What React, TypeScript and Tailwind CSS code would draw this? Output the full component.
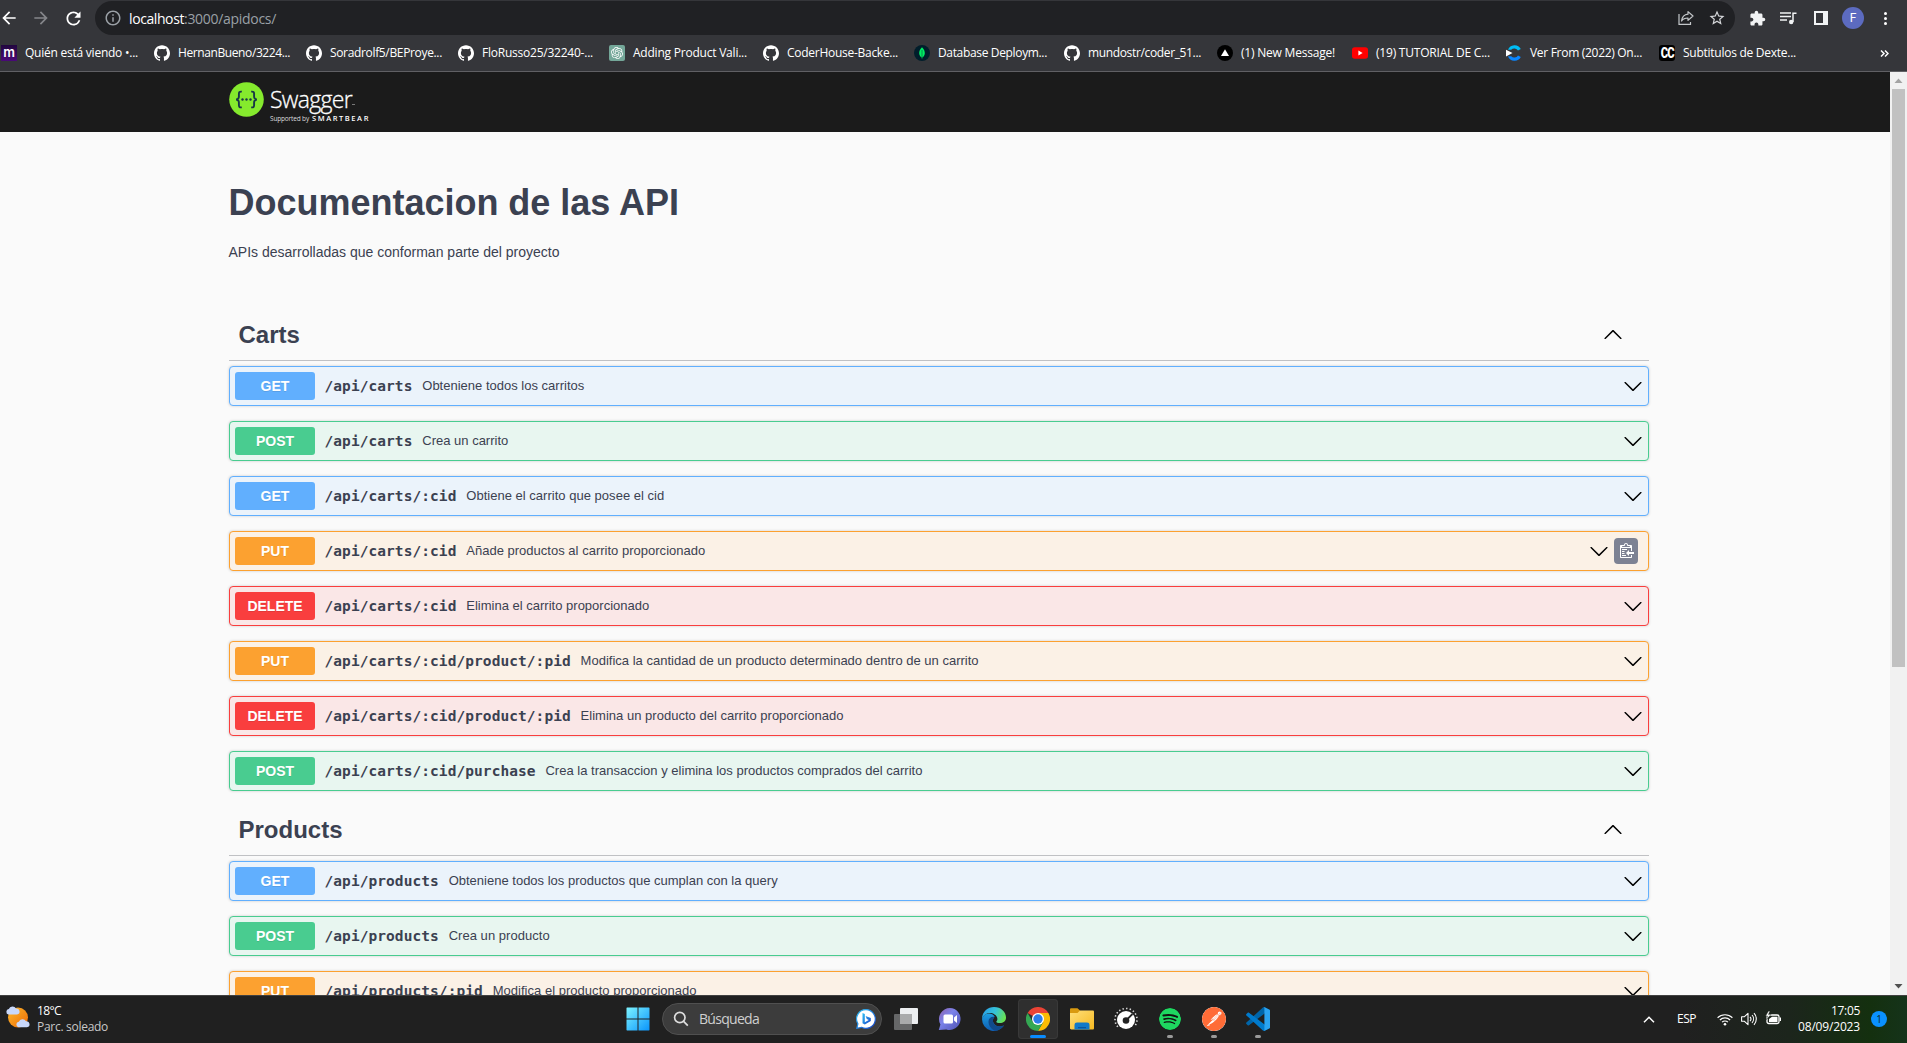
import React, { useLayoutEffect, useRef, useState } from "react";
import { SiGithub, SiOpenai, SiSpotify, SiPostman } from "react-icons/si";
import { MdArrowBack, MdArrowForward, MdRefresh, MdInfoOutline, MdStarBorder, MdExtension } from "react-icons/md";

/* One line of text whose letter spacing is adjusted to fill a given width. */
function Fit({ text, width, className = "" }: { text: string; width: number; className?: string }) {
  const ref = useRef<HTMLSpanElement>(null);
  const [spacing, setSpacing] = useState(0);
  useLayoutEffect(() => {
    if (ref.current) {
      const natural = ref.current.getBoundingClientRect().width;
      setSpacing((width - natural) / text.length);
    }
  }, [text, width]);
  return (
    <span ref={ref} className={"inline-block whitespace-pre " + className} style={{ letterSpacing: spacing }}>
      {text}
    </span>
  );
}

const Github = () => <SiGithub size={16} className="text-white" />;

const bookmarks: { icon: React.ReactNode; text: string; width: number; slot: string }[] = [
  {
    icon: (
      <span className="flex h-4 w-4 items-center justify-center bg-linear-to-b from-[#22073f] to-[#4a0a78] pb-0.5 font-['Inter'] text-[13px] leading-none font-semibold text-white">
        m
      </span>
    ),
    text: "Quién está viendo •...",
    width: 113,
    slot: "w-[153px]",
  },
  { icon: <Github />, text: "HernanBueno/3224...", width: 112, slot: "w-[152px]" },
  { icon: <Github />, text: "Soradrolf5/BEProye...", width: 112, slot: "w-[152px]" },
  { icon: <Github />, text: "FloRusso25/32240-...", width: 111, slot: "w-[151px]" },
  {
    icon: (
      <span className="flex h-4 w-4 items-center justify-center rounded-[2px] bg-[#74a799]">
        <SiOpenai size={12} className="text-white" />
      </span>
    ),
    text: "Adding Product Vali...",
    width: 114,
    slot: "w-[154px]",
  },
  { icon: <Github />, text: "CoderHouse-Backe...", width: 111, slot: "w-[151px]" },
  {
    icon: (
      <svg width="16" height="16" viewBox="0 0 16 16">
        <circle cx="8" cy="8" r="8" fill="#001e2b" />
        <path d="M8 2.200c2 2 3 4 2.800 6.300-.1 1.900-1.200 3.300-2.800 4.200-1.600-.9-2.700-2.300-2.800-4.200C5 6.200 6 4.200 8 2.200z" fill="#00ed64" />
        <path d="M8 5v9" stroke="#067a45" strokeWidth=".8" />
      </svg>
    ),
    text: "Database Deploym...",
    width: 109,
    slot: "w-[150px]",
  },
  { icon: <Github />, text: "mundostr/coder_51...", width: 113, slot: "w-[153px]" },
  {
    icon: (
      <svg width="16" height="16" viewBox="0 0 16 16">
        <circle cx="8" cy="8" r="8" fill="#000" />
        <path d="M8 4.200l4 6.800H4z" fill="#fff" />
      </svg>
    ),
    text: "(1) New Message!",
    width: 94,
    slot: "w-[135px]",
  },
  {
    icon: (
      <svg width="16" height="16" viewBox="0 0 16 16">
        <rect x="0" y="2.300" width="16" height="11.500" rx="2.800" fill="#f00" />
        <path d="M6.400 5.600l4.200 2.400-4.200 2.400z" fill="#fff" />
      </svg>
    ),
    text: "(19) TUTORIAL DE C...",
    width: 114,
    slot: "w-[154px]",
  },
  {
    icon: (
      <svg width="16" height="16" viewBox="0 0 16 16">
        <path d="M2 4.800A7 7 0 0 1 14.800 4L12 5.600A4.300 4.300 0 0 0 5.200 4.800z" fill="#00bdf5" />
        <path d="M2 11.200A7 7 0 0 0 14.800 12L12 10.400a4.300 4.300 0 0 1-6.800.8z" fill="#0a86ff" />
        <path d="M0 4.800l6.500 3.300L0 11.400z" fill="#fff" />
      </svg>
    ),
    text: "Ver From (2022) On...",
    width: 112,
    slot: "w-[153px]",
  },
  {
    icon: (
      <span className="flex h-4 w-4 items-center justify-center rounded-[3px] bg-black font-['Roboto'] text-[14px] leading-none font-black tracking-[-1px] text-white">
        <span className="scale-x-[0.8]">CC</span>
      </span>
    ),
    text: "Subtitulos de Dexte...",
    width: 113,
    slot: "w-[200px]",
  },
];

function BrowserBar() {
  return (
    <div className="h-[72px] w-full shrink-0 border-b border-[#606064] bg-[#35363a] font-['Open_Sans',sans-serif] text-white">
      <div className="flex h-9 items-center">
        <MdArrowBack size={20} className="-ml-px shrink-0 text-white" />
        <MdArrowForward size={20} className="ml-[12px] shrink-0 text-[#85868a]" />
        <MdRefresh size={21} className="ml-[12px] shrink-0 text-white" />
        <div className="ml-[11px] flex h-[34px] w-[1640px] items-center rounded-full bg-[#202124] pr-[9px] pl-[9px]">
          <MdInfoOutline size={18} className="text-[#9aa0a6]" />
          <div className="ml-[7px] flex grow items-center text-[14px]">
            <Fit text="localhost" width={55} className="text-white" />
            <Fit text=":3000/apidocs/" width={92} className="text-[#9aa0a6]" />
          </div>
          <svg width="16" height="16" viewBox="0 0 16 16" fill="none" stroke="#c4c7ca" strokeWidth="1.200" className="mr-[14px]">
            <path d="M1 4v10.400h11.500V12" />
            <path d="M10 1.600l5 4.400-5 4.400V8C7 8 5 8.800 3.600 11 4 7 6.500 4.600 10 4.200z" strokeLinejoin="round" />
          </svg>
          <MdStarBorder size={18} className="text-[#d5d7da]" />
        </div>
        <MdExtension size={17} className="ml-[14px] text-[#f1f3f4]" />
        <svg width="17" height="14" viewBox="0 0 17 14" className="ml-[14px]" fill="none" stroke="#f1f3f4" strokeWidth="1.500">
          <path d="M0 2h11M0 5.500h11M0 9h7" />
          <path d="M13 11V2.200h3.500" />
          <circle cx="11.200" cy="11" r="2.200" fill="#f1f3f4" stroke="none" />
        </svg>
        <svg width="14" height="14" viewBox="0 0 14 14" className="ml-[17px]">
          <path d="M0 0h14v14H0zM2 2v10h7V2z" fill="#f1f3f4" fillRule="evenodd" />
        </svg>
        <div className="ml-[14px] flex h-[22px] w-[22px] items-center justify-center rounded-full bg-[#5c6bc0] font-['Roboto'] text-[12px] leading-none">
          F
        </div>
        <div className="ml-[20px] flex flex-col gap-[2px]">
          <span className="h-[3px] w-[3px] rounded-full bg-white" />
          <span className="h-[3px] w-[3px] rounded-full bg-white" />
          <span className="h-[3px] w-[3px] rounded-full bg-white" />
        </div>
      </div>
      <div className="flex h-[34px] items-center pl-px">
        {bookmarks.map((b) => (
          <div key={b.text} className={"flex shrink-0 items-center gap-2 " + b.slot}>
            {b.icon}
            <Fit text={b.text} width={b.width} className="text-[12px] leading-4" />
          </div>
        ))}
        <svg width="9" height="7" viewBox="0 0 9 7" fill="none" stroke="#fff" strokeWidth="1.500" className="ml-[21px]">
          <path d="M1 .5l3 3-3 3M5 .5l3 3-3 3" />
        </svg>
      </div>
    </div>
  );
}

function SwaggerLogo() {
  return (
    <div className="flex gap-[6px]">
      <svg width="35" height="35" viewBox="0 0 35 35" className="mt-[10px]">
        <circle cx="17.500" cy="17.500" r="17.300" fill="#85ea2d" />
        <g fill="none" stroke="#173647" strokeWidth="1.900">
          <path d="M12.800 9.600c-2.600-.2-3 .7-2.900 3 .1 2.600.2 4.400-2.700 4.900 2.900.5 2.800 2.300 2.700 4.900-.1 2.300.3 3.200 2.900 3" />
          <path d="M22.200 9.600c2.600-.2 3 .7 2.900 3-.1 2.600-.2 4.400 2.700 4.900-2.900.5-2.800 2.300-2.700 4.900.1 2.300-.3 3.200-2.900 3" />
        </g>
        <g fill="#173647">
          <circle cx="13.500" cy="17.500" r="1.200" />
          <circle cx="17.500" cy="17.500" r="1.200" />
          <circle cx="21.500" cy="17.500" r="1.200" />
        </g>
      </svg>
      <div className="flex flex-col pt-[13px] font-['Open_Sans',sans-serif] text-white">
        <div className="flex items-end">
          <Fit text="Swagger" width={82} className="text-[23px] leading-[28px] font-light [-webkit-text-stroke:0.3px_white]" />
          <span className="mb-[8px] h-px w-[3px] bg-[#777]" />
        </div>
        <div className="flex items-baseline gap-[3px] leading-[10px]">
          <Fit text="Supported by" width={39} className="text-[6.500px] text-[#ddd]" />
          <Fit text="SMARTBEAR" width={58} className="text-[7.500px] font-semibold" />
        </div>
      </div>
    </div>
  );
}

const Chevron = ({ up = false }: { up?: boolean }) => (
  <svg width="20" height="20" viewBox="0 0 20 20" className="shrink-0">
    {up ? (
      <path d="M17.418 14.908c.272.268.709.268.979 0s.271-.701 0-.969l-7.908-7.830c-.27-.268-.707-.268-.979 0l-7.908 7.830c-.27.268-.27.701 0 .969.271.268.709.268.979 0L10 7.767z" />
    ) : (
      <path d="M17.418 6.109c.272-.268.709-.268.979 0s.271.701 0 .969l-7.908 7.830c-.27.268-.707.268-.979 0l-7.908-7.830c-.27-.268-.27-.701 0-.969.271-.268.709-.268.979 0L10 13.250z" />
    )}
  </svg>
);

const styles = {
  GET: { box: "border-[#61affe] bg-[#ebf3fb]", tag: "bg-[#61affe]" },
  POST: { box: "border-[#49cc90] bg-[#e8f6f0]", tag: "bg-[#49cc90]" },
  PUT: { box: "border-[#fca130] bg-[#fbf1e6]", tag: "bg-[#fca130]" },
  DELETE: { box: "border-[#f93e3e] bg-[#fae7e7]", tag: "bg-[#f93e3e]" },
};

type Op = { method: keyof typeof styles; path: string; text: string; width: number; copy?: boolean };

const carts: Op[] = [
  { method: "GET", path: "/api/carts", text: "Obteniene todos los carritos", width: 162 },
  { method: "POST", path: "/api/carts", text: "Crea un carrito", width: 86 },
  { method: "GET", path: "/api/carts/:cid", text: "Obtiene el carrito que posee el cid", width: 198 },
  { method: "PUT", path: "/api/carts/:cid", text: "Añade productos al carrito proporcionado", width: 239, copy: true },
  { method: "DELETE", path: "/api/carts/:cid", text: "Elimina el carrito proporcionado", width: 183 },
  { method: "PUT", path: "/api/carts/:cid/product/:pid", text: "Modifica la cantidad de un producto determinado dentro de un carrito", width: 398 },
  { method: "DELETE", path: "/api/carts/:cid/product/:pid", text: "Elimina un producto del carrito proporcionado", width: 263 },
  { method: "POST", path: "/api/carts/:cid/purchase", text: "Crea la transaccion y elimina los productos comprados del carrito", width: 377 },
];

const products: Op[] = [
  { method: "GET", path: "/api/products", text: "Obteniene todos los productos que cumplan con la query", width: 329 },
  { method: "POST", path: "/api/products", text: "Crea un producto", width: 101 },
  { method: "PUT", path: "/api/products/:pid", text: "Modifica el producto proporcionado", width: 204 },
];

function OpBlock({ op }: { op: Op }) {
  const s = styles[op.method];
  return (
    <div className={"flex h-10 shrink-0 items-center rounded border pr-[5px] pl-[5px] shadow-[0_0_3px_rgba(0,0,0,0.19)] " + s.box}>
      <span
        className={
          "flex h-7 w-20 items-center justify-center rounded-[3px] text-[14px] font-bold text-white [text-shadow:0_1px_0_rgba(0,0,0,0.1)] " + s.tag
        }
      >
        {op.method}
      </span>
      <Fit
        text={op.path}
        width={op.path.length * 8.797}
        className="ml-[9.500px] pt-[2px] font-['DejaVu_Sans_Mono',monospace] text-[14.500px] font-bold"
      />
      <Fit text={op.text} width={op.width} className="ml-[9.800px] text-[13px]" />
      <span className="ml-auto flex items-center">
        <Chevron />
        {op.copy && (
          <span className="mr-[5px] ml-[5px] flex h-[26px] w-6 items-center justify-center rounded bg-[#7d8293]">
            <svg width="15" height="16" viewBox="0 0 15 16" fill="#fff">
              <path d="M3 12h4v1H3zm5-6H3v1h5zm2 3V7l-3 3 3 3v-2h5V9zM5.500 8H3v1h2.500zM3 11h2.500v-1H3zm9 1h1v2c-.02.28-.11.52-.3.700-.19.180-.42.280-.7.300H2c-.55 0-1-.45-1-1V3c0-.55.450-1 1-1h3c0-1.110.890-2 2-2s2 .89 2 2h3c.55 0 1 .45 1 1v5h-1V5H2v9h10zM3 4h8c0-.55-.45-1-1-1H9c-.55 0-1-.45-1-1s-.45-1-1-1-1 .45-1 1-.45 1-1 1H4c-.55 0-1 .45-1 1z" />
            </svg>
          </span>
        )}
      </span>
    </div>
  );
}

function Section({ title, ops }: { title: string; ops: Op[] }) {
  return (
    <section>
      <div className="mb-[5px] flex h-[51px] items-center justify-between border-b border-[#c0c1c4] pr-[26px] pl-[9.500px]">
        <h2 className="text-[24px] leading-none font-bold">{title}</h2>
        <span className="pb-[3px]">
          <Chevron up />
        </span>
      </div>
      <div className="flex flex-col gap-[15px]">
        {ops.map((op) => (
          <OpBlock key={op.method + op.path} op={op} />
        ))}
      </div>
    </section>
  );
}

function Docs() {
  return (
    <div className="flex min-h-0 grow basis-0">
      <main className="grow overflow-hidden bg-[#fafafa] font-['Liberation_Sans',Arial,sans-serif] text-[#3b4151]">
        <header className="h-[60px] bg-[#1b1b1b] pl-[229px]">
          <SwaggerLogo />
        </header>
        <div className="ml-[229px] flex w-[1420px] flex-col">
          <h1 className="mt-[50px] -ml-[0.500px] text-[36px] leading-[41px] font-bold">
            <Fit text="Documentacion de las API" width={450.5} />
          </h1>
          <p className="mt-[20px] -ml-[0.500px] text-[14px] leading-[18px]">
            <Fit text="APIs desarrolladas que conforman parte del proyecto" width={331} />
          </p>
          <div className="mt-[49px] flex flex-col gap-[14px]">
            <Section title="Carts" ops={carts} />
            <Section title="Products" ops={products} />
          </div>
        </div>
      </main>
      <div className="flex w-[17px] shrink-0 flex-col items-center bg-[#f1f1f1]">
        <svg width="17" height="17" viewBox="0 0 17 17">
          <path d="M8.500 6.500l4 4.500h-8z" fill="#a3a3a3" />
        </svg>
        <div className="h-[578px] w-[13px] bg-[#c1c1c1]" />
        <svg width="17" height="17" viewBox="0 0 17 17" className="mt-auto">
          <path d="M8.500 10.500l4-4.500h-8z" fill="#505050" />
        </svg>
      </div>
    </div>
  );
}

const StartIcon = () => (
  <svg width="24" height="24" viewBox="0 0 24 24">
    <defs>
      <linearGradient id="win" x1="0" y1="0" x2="1" y2="1">
        <stop offset="0" stopColor="#7df3ff" />
        <stop offset="1" stopColor="#0a94fb" />
      </linearGradient>
    </defs>
    <path d="M1 .5h10.500V11.500H.5V1zM12.500.5H23l.5.500v10.500h-11zM.5 12.500h11v11H1l-.5-.5zM12.500 12.500h11V23l-.5.500H12.500z" fill="url(#win)" />
  </svg>
);

const BingIcon = () => (
  <svg width="20" height="20" viewBox="0 0 20 20">
    <defs>
      <linearGradient id="bing" x1="0" y1="0" x2="1" y2="1">
        <stop offset="0" stopColor="#2fc1f5" />
        <stop offset="1" stopColor="#1743c9" />
      </linearGradient>
    </defs>
    <path d="M10 .6a9.400 9.400 0 1 1-4.500 17.700L.8 19.300 1.900 14.800A9.400 9.400 0 0 1 10 .6z" fill="#fff" stroke="url(#bing)" strokeWidth="1.200" />
    <path d="M6.500 4l2.300.9v8.300l4-2.200-2-1-1.200-2.900 5.200 2v2.900l-6 3.500-2.300-1.300z" fill="url(#bing)" />
  </svg>
);

const TaskViewIcon = () => (
  <svg width="24" height="24" viewBox="0 0 24 24">
    <rect x="6" y="1" width="18" height="16" rx="1" fill="#eceef0" />
    <rect x="0" y="7" width="18" height="16" rx="1" fill="#6e6f70" fillOpacity=".9" />
    <path d="M6 7h12v10H6z" fill="#a9aaab" />
  </svg>
);

const ChatIcon = () => (
  <svg width="24" height="24" viewBox="0 0 24 24">
    <defs>
      <linearGradient id="chat" x1="0" y1="0" x2="1" y2="1">
        <stop offset="0" stopColor="#8f5fa8" />
        <stop offset=".4" stopColor="#7b83eb" />
        <stop offset="1" stopColor="#4f52b2" />
      </linearGradient>
    </defs>
    <path d="M12 1a11 11 0 1 1-3.700 21.500L.8 23l1.600-5.600A11 11 0 0 1 12 1z" fill="url(#chat)" />
    <rect x="5.500" y="7.500" width="9.500" height="9" rx="1.500" fill="#fff" />
    <path d="M16 10.500L19 8v8l-3-2.500z" fill="#fff" />
  </svg>
);

const EdgeIcon = () => (
  <svg width="24" height="24" viewBox="0 0 24 24">
    <defs>
      <linearGradient id="edgeTop" x1="0" y1=".3" x2="1" y2=".6">
        <stop offset="0" stopColor="#2a9fe8" />
        <stop offset=".5" stopColor="#35c3d9" />
        <stop offset="1" stopColor="#6be34e" />
      </linearGradient>
      <linearGradient id="edgeLow" x1="0" y1="0" x2="0" y2="1">
        <stop offset="0" stopColor="#1b9de2" />
        <stop offset="1" stopColor="#0f5cb0" />
      </linearGradient>
    </defs>
    <path d="M0 12A12 12 0 0 0 22 18.600c-3 1.400-8.500 1.400-10.500-2.600-1.500-3 .2-5.500 1.200-6.200C10 5 2 5.500 0 12z" fill="url(#edgeLow)" />
    <path d="M6.500 14c-.3 5 3.500 9.200 7.500 9.800 3.500-.6 6.500-2.600 8-5.200-3 1.400-8.500 1.400-10.500-2.600-1.300-2.600-.2-5 1-6-3-.8-5.700 1.200-6 4z" fill="#114a8b" />
    <path d="M0 12C0 5 5.500 0 12 0c7 0 12 5 12 10.500 0 4-3 5.500-6 5.500-2.500 0-3.800-.8-3.700-1.400.2-.6 1.100-1 1.100-2.600C15.400 8.500 11.500 6 8 6c-4 0-7 2.500-8 6z" fill="url(#edgeTop)" />
  </svg>
);

const ChromeIcon = () => (
  <svg width="24" height="24" viewBox="0 0 24 24">
    <path d="M12 12L1.600 6A12 12 0 0 1 22.400 6z" fill="#ea4335" />
    <path d="M12 12V6h10.400A12 12 0 0 1 12 24l5.200-9z" fill="#fbbc04" />
    <path d="M12 12l5.200 3L12 24A12 12 0 0 1 1.600 6l5.200 9z" fill="#34a853" />
    <circle cx="12" cy="12" r="6" fill="#fff" />
    <circle cx="12" cy="12" r="4.700" fill="#2b7de9" />
  </svg>
);

const FolderIcon = () => (
  <svg width="24" height="24" viewBox="0 0 24 24">
    <defs>
      <linearGradient id="folder" x1="0" y1="0" x2="1" y2="1">
        <stop offset="0" stopColor="#ffdf7a" />
        <stop offset="1" stopColor="#f5b921" />
      </linearGradient>
    </defs>
    <path d="M0 2.500C0 1.700.5 1.200 1.300 1.200h6.200L10 3.500V8H0z" fill="#d99a10" />
    <path d="M0 6h7.500L10 3.500h12.700c.8 0 1.300.5 1.300 1.300v16.500c0 .8-.5 1.200-1.300 1.200H1.300C.5 22.500 0 22 0 21.300z" fill="url(#folder)" />
    <path d="M4.500 22.500V18c0-1.700 1-2.500 2.500-2.500h10c1.500 0 2.500.8 2.500 2.500v4.500z" fill="#1279c9" />
    <path d="M8 20h8v1.200H8z" fill="#0b549c" />
  </svg>
);

const GaugeIcon = () => (
  <svg width="24" height="24" viewBox="0 0 24 24">
    <path d="M3.800 19.800A11 11 0 1 1 20.200 19.800" fill="none" stroke="#ddd" strokeWidth="1.600" strokeDasharray="1.400 2.200" />
    <circle cx="12" cy="13" r="9" fill="#fff" />
    <circle cx="12" cy="13.500" r="3.300" fill="#222" />
    <path d="M12.500 13L18.500 7" stroke="#222" strokeWidth="1.800" />
  </svg>
);

const VsCodeIcon = () => (
  <svg width="24" height="24" viewBox="0 0 24 24">
    <path d="M23.500 2.700L18.600.3c-.6-.3-1.200-.2-1.700.3L.4 15.600c-.4.400-.4 1.100 0 1.500l1.300 1.200c.4.300.9.300 1.300 0L22.900 3.300c.4-.3 1.100 0 1.100.6z" fill="#0065a9" />
    <path d="M23.500 21.300l-4.900 2.400c-.6.300-1.200.2-1.700-.3L.4 8.400C0 8 0 7.300.4 6.900l1.300-1.200c.4-.3.900-.3 1.300 0L22.900 20.700c.4.300 1.100 0 1.100-.6z" fill="#007acc" />
    <path d="M18.600 23.700c-.6.300-1.200.2-1.700-.3.600.6 1.500.2 1.500-.6V1.200c0-.8-.9-1.200-1.500-.6.500-.5 1.100-.6 1.700-.3l4.900 2.400c.3.200.5.500.5.900v16.800c0 .4-.2.700-.5.900z" fill="#2ba3f0" />
  </svg>
);

function TaskApp({ children, state }: { children: React.ReactNode; state?: "active" | "open" }) {
  return (
    <div
      className={
        "relative mx-[2px] flex h-10 w-10 items-center justify-center rounded " +
        (state === "active" ? "bg-[#2f2f2f] shadow-[inset_0_0_0_1px_#393939]" : "")
      }
    >
      {children}
      {state === "active" && <span className="absolute bottom-px left-3 h-[3px] w-4 rounded-full bg-[#0a8cff]" />}
      {state === "open" && <span className="absolute bottom-px left-[17px] h-[3px] w-[6px] rounded-full bg-[#9a9a9a]" />}
    </div>
  );
}

function Taskbar() {
  return (
    <footer className="flex h-12 shrink-0 items-center border-t border-[#414141] bg-[linear-gradient(90deg,#202020_0,#202020_1680px,#1c251c_1790px,#14300f_1870px,#15331a_1907px)] pb-px font-['Open_Sans',sans-serif] text-white">
      <svg width="24" height="24" viewBox="0 0 24 24" className="mb-1 ml-[6px]">
        <defs>
          <linearGradient id="sun" x1="0" y1="0" x2="1" y2="1">
            <stop offset="0" stopColor="#fcb92c" />
            <stop offset="1" stopColor="#ee6a06" />
          </linearGradient>
        </defs>
        <circle cx="12" cy="12.500" r="10" fill="url(#sun)" />
        <path d="M2.500 9.500a2.800 2.800 0 0 1 .3-5.500A4 4 0 0 1 10 3.500a3 3 0 0 1 1 6z" fill="#c8d8fb" />
        <path d="M12.500 22.200a2.800 2.800 0 0 1 .3-5.500 4 4 0 0 1 7.200-.5 3 3 0 0 1 1 6z" fill="#c8d8fb" />
      </svg>
      <div className="ml-[7px] flex w-[579px] flex-col text-[12px] leading-4">
        <Fit text="18°C" width={24} className="self-start" />
        <Fit text="Parc. soleado" width={71} className="self-start text-[#c8c8c8]" />
      </div>
      <div className="ml-[9.500px]">
        <StartIcon />
      </div>
      <div className="ml-[12.500px] flex h-8 w-[220px] items-center rounded-full border border-[#505050] bg-[#3c3c3c] px-[10px]">
        <svg width="16" height="16" viewBox="0 0 16 16" fill="none" stroke="#dedede" strokeWidth="1.700">
          <circle cx="6.800" cy="6.500" r="5.200" />
          <path d="M10.600 10.400l4.200 4.300" />
        </svg>
        <Fit text="Búsqueda" width={60} className="ml-[10px] text-[14px] leading-5 text-[#cfcfcf]" />
        <span className="-mr-[5px] ml-auto">
          <BingIcon />
        </span>
      </div>
      <div className="ml-[2px] flex">
        <TaskApp><TaskViewIcon /></TaskApp>
        <TaskApp><ChatIcon /></TaskApp>
        <TaskApp><EdgeIcon /></TaskApp>
        <TaskApp state="active"><ChromeIcon /></TaskApp>
        <TaskApp><FolderIcon /></TaskApp>
        <TaskApp><GaugeIcon /></TaskApp>
        <TaskApp state="open"><SiSpotify size={22} className="rounded-full bg-[#111] text-[#1ed760]" /></TaskApp>
        <TaskApp state="open"><SiPostman size={24} className="rounded-full bg-white text-[#ff6c37]" /></TaskApp>
        <TaskApp state="open"><VsCodeIcon /></TaskApp>
      </div>
      <svg width="12" height="7" viewBox="0 0 12 7" fill="none" stroke="#fff" strokeWidth="1.500" className="ml-[363px]">
        <path d="M1 6.200l5-5 5 5" />
      </svg>
      <Fit text="ESP" width={19} className="ml-[22px] text-[12px]" />
      <svg width="16" height="13" viewBox="0 0 16 13" fill="none" stroke="#fff" strokeWidth="1.200" className="ml-[21px]">
        <path d="M.6 4.800a10.500 10.500 0 0 1 14.800 0M2.900 7a7.200 7.200 0 0 1 10.200 0M5.100 9.200a4.100 4.100 0 0 1 5.800 0" />
        <circle cx="8" cy="11.200" r="1.300" fill="#fff" stroke="none" />
      </svg>
      <svg width="17" height="14" viewBox="0 0 17 14" fill="none" stroke="#fff" strokeWidth="1.100" className="ml-[8px]">
        <path d="M.6 4.800h2.600L7 1.300v11.400L3.200 9.200H.6z" strokeLinejoin="round" />
        <path d="M9 4.800a3.300 3.300 0 0 1 0 4.400M11 3a6 6 0 0 1 0 8M13 1.200a8.500 8.500 0 0 1 0 11.600" />
      </svg>
      <svg width="17" height="14" viewBox="0 0 17 14" className="mb-[2px] ml-[7px]">
        <rect x="2" y="4" width="12" height="8.500" rx="1.800" fill="none" stroke="#fff" strokeWidth="1.300" />
        <path d="M4 8l3-2.300h5.500v5.300H4zM14.700 6.500h1.300v3.500h-1.300z" fill="#fff" />
        <path d="M3.500 0L.5 5h2L1.500 8.500 6 3.500H3.500L5 0z" fill="#fff" stroke="#1c241c" strokeWidth=".5" />
      </svg>
      <div className="ml-auto flex flex-col items-end text-[12px] leading-4">
        <Fit text="17:05" width={29} />
        <Fit text="08/09/2023" width={62} />
      </div>
      <div className="mr-[20px] ml-[11px] flex h-4 w-4 items-center justify-center rounded-full bg-[#0a91ff] text-[10px] leading-none text-[#0b2a1c]">
        1
      </div>
    </footer>
  );
}

export default function App() {
  return (
    <div className="flex h-[1043px] w-[1907px] flex-col overflow-hidden">
      <BrowserBar />
      <Docs />
      <Taskbar />
    </div>
  );
}
